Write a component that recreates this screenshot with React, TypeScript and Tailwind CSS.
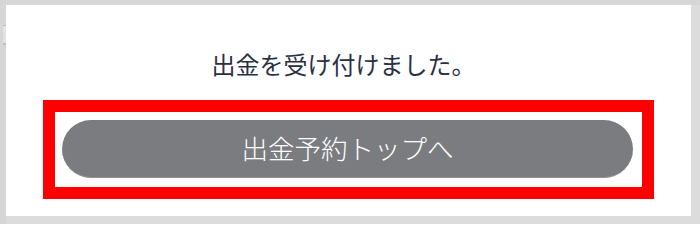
import React from "react";

export default function App() {
  return (
    <div
      className="flex h-[224px] w-[700px] bg-[#dcdcdc]"
      style={{ fontFamily: '"Noto Sans CJK JP", "Noto Sans", sans-serif' }}
    >
      <div className="flex w-[6px] flex-col bg-[#d6d6d6] pt-[25px]">
        <div className="ml-[3px] h-[20px] w-[3px] border-y border-[#bdbdbd] bg-[#e2e2e2] [border-bottom-width:2px]" />
      </div>
      <div className="flex flex-1 flex-col pr-[9px] pb-[8px]">
        <div className="h-[5px] bg-[#d6d6d6] -mr-[9px]" />
        <div className="flex flex-1 flex-col bg-white">
          <div className="flex justify-center pt-[41px] pr-[10px]">
            <p className="text-[24px] font-normal leading-[36px] text-[#2a3044]">
              出金を受け付けました。
            </p>
          </div>
          <div className="mx-auto mt-[18px] box-border h-[99px] w-[611px] border-[12px] border-[#ff0000] pt-[8px] pl-[7px]">
            <button
              type="button"
              className="flex h-[58px] w-[571px] items-center justify-center rounded-full border-b border-[#909195] bg-[#7b7c80] pb-[1px] text-[26.5px] font-light leading-none text-white"
              style={{ fontFamily: '"Noto Sans CJK JP", "Noto Sans", sans-serif' }}
            >
              出金予約トップへ
            </button>
          </div>
        </div>
      </div>
    </div>
  );
}
